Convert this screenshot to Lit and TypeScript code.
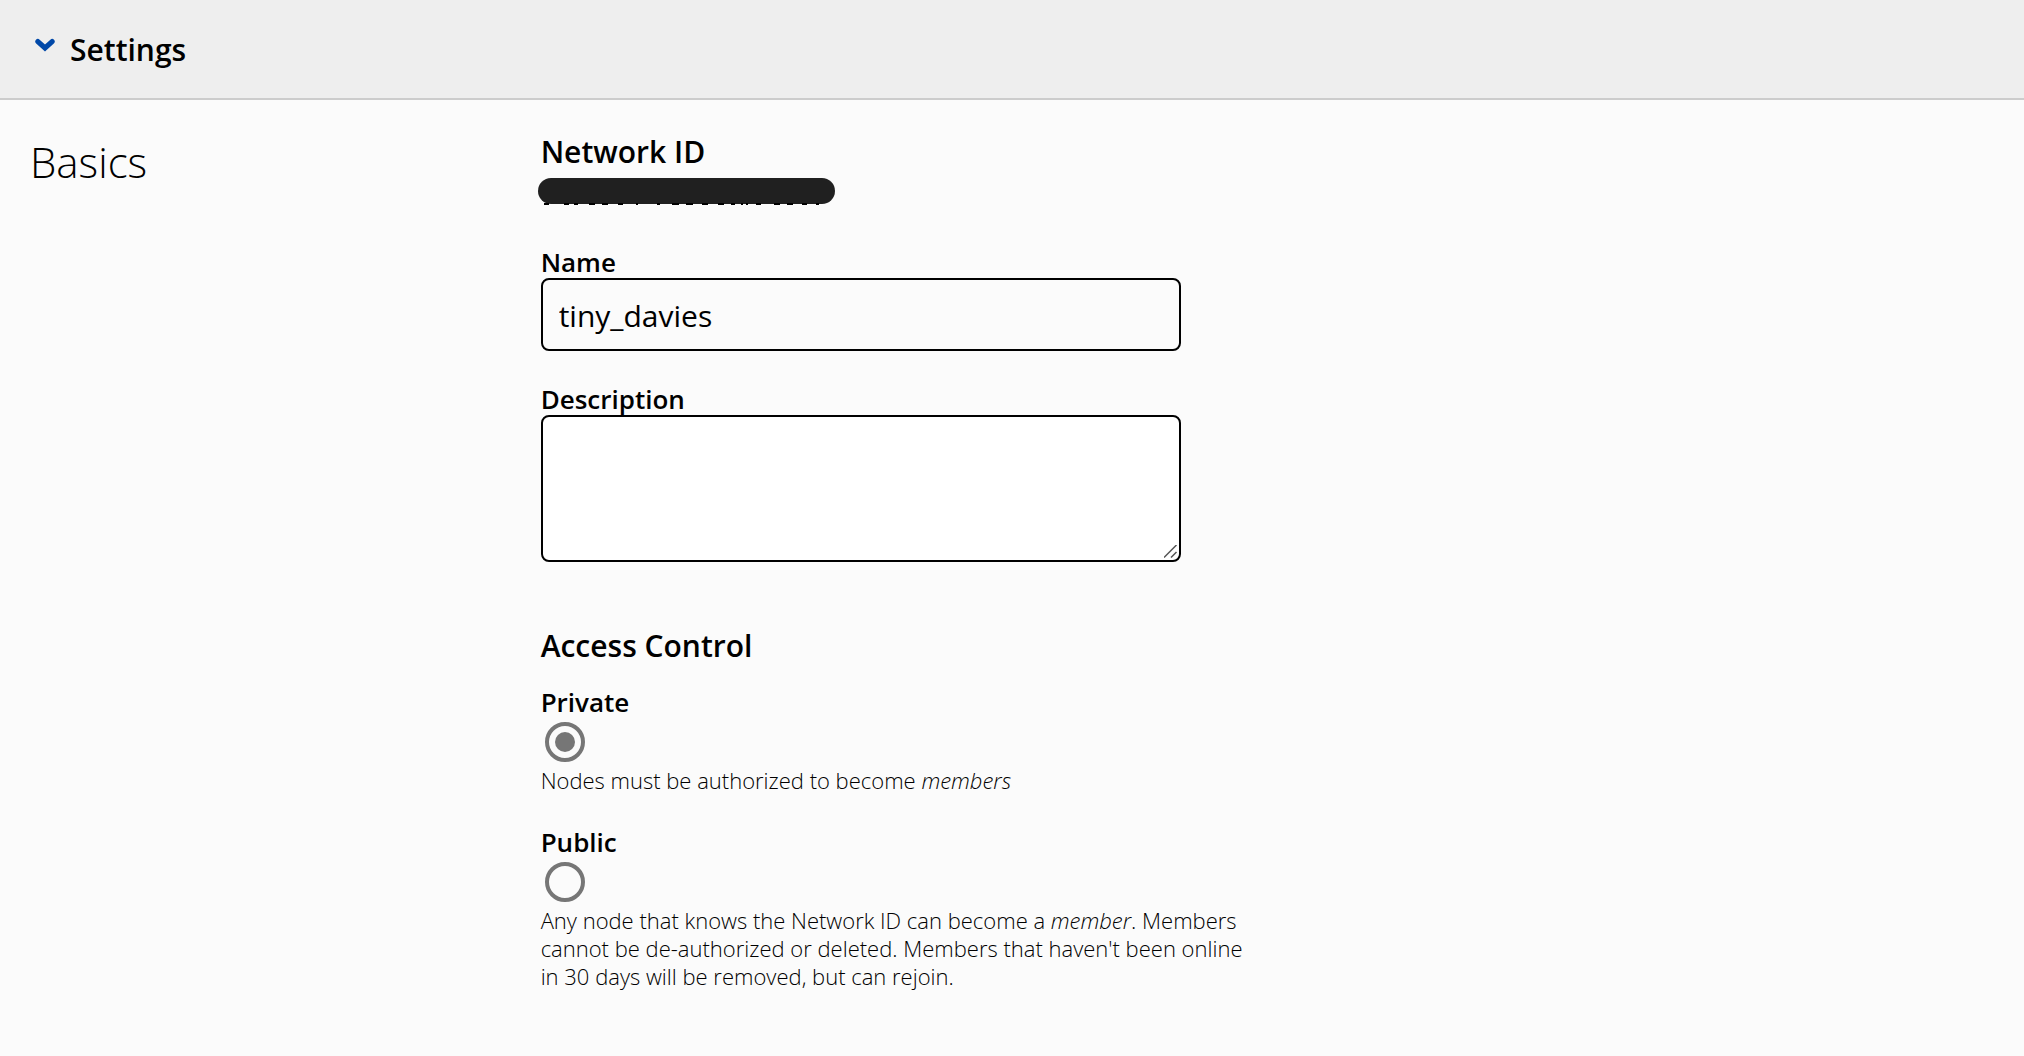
import { LitElement, html, css } from "lit";
import { customElement, state } from "lit/decorators.js";

@customElement("app-root")
export class AppRoot extends LitElement {
  static styles = css`
    :host {
      display: block;
      min-height: 100vh;
      background: #fbfbfb;
      color: #000;
      font-family: "Open Sans", "Noto Sans", sans-serif;
      font-size: 28px;
      line-height: 32px;
    }
    h1, h2, h3, p, fieldset, legend { margin: 0; padding: 0; border: 0; }
    .bar { background: #eee; border-bottom: 2px solid #ccc; }
    .toggle {
      display: flex;
      align-items: center;
      gap: 15px;
      width: 100%;
      padding: 28px 35px 26px;
      border: 0;
      background: none;
      color: inherit;
      font: 600 30px/44px "Open Sans", "Noto Sans", sans-serif;
      text-align: left;
    }
    .chevron { width: 20px; height: 14px; margin-bottom: 8px; overflow: visible; }
    .body {
      display: grid;
      grid-template-columns: 26% 1fr;
      padding: 32px 30px;
    }
    .section { font-size: 42px; line-height: 60px; font-weight: 300; }
    .heading { font-size: 30px; line-height: 40px; font-weight: 600; }
    .redacted { display: block; width: 297px; height: 28px; margin: 6px 0 0 -3px; }
    .field { display: flex; flex-direction: column; max-width: 640px; }
    .label { font-size: 26px; line-height: 32px; font-weight: 600; }
    .control {
      box-sizing: border-box;
      width: 100%;
      border: 2px solid #000;
      border-radius: 8px;
      padding: 13px 16px 11px;
      color: #000;
      font: 400 30px/45px "Open Sans", "Noto Sans", sans-serif;
    }
    .text { height: 73px; background: transparent; }
    .area { height: 147px; background: #fff; }
    .area::-webkit-resizer {
      background: url("data:image/svg+xml,%3Csvg xmlns='http://www.w3.org/2000/svg' width='15' height='15'%3E%3Cpath d='M0 12.5L12.5 0M7 12.5L12.5 7' stroke='%23555' stroke-width='1.5' fill='none'/%3E%3C/svg%3E") no-repeat;
    }
    .option { display: flex; flex-direction: column; align-items: flex-start; max-width: 720px; }
    .radio { width: 40px; height: 40px; margin: 4px; appearance: none; border: 4px solid #767676; border-radius: 50%; padding: 6px; }
    .radio:checked { background: #767676 content-box; }
    .help { font-size: 22px; line-height: 28px; font-weight: 300; }
    .name { margin-top: 40px; }
    .description { margin-top: 32px; }
    .access { margin-top: 64px; }
    .private { margin-top: 20px; }
    .public { margin-top: 32px; }
  `;

  @state() private open = true;
  @state() private access = "private";

  render() {
    return html`
      <header class="bar">
        <h1>
          <button class="toggle" aria-expanded=${this.open} @click=${() => (this.open = !this.open)}>
            <svg class="chevron" viewBox="0 0 20 14" aria-hidden="true">
              <path d="M2.9 2.6L10 9L17.1 2.6" fill="none" stroke="#0048a8" stroke-width="5.2" stroke-linecap="round" />
            </svg>
            Settings
          </button>
        </h1>
      </header>
      ${this.open ? this.settings() : ""}
    `;
  }

  private settings() {
    return html`
      <main class="body">
        <h2 class="section">Basics</h2>
        <form>
          <h3 class="heading">Network ID</h3>
          <svg class="redacted" viewBox="0 0 297 28" aria-hidden="true">
            <rect width="297" height="26" rx="13" fill="#202020" />
            <path d="M6 26h5M26 26h5M36 26h4M51 26h6M64 26h6M80 26h5M98 26h2M119 26h3M134 26h7M148 26h7M164 26h6M180 26h6M193 26h4M203 26h2M208 26h2M218 26h5M236 26h6M249 26h6M264 26h5M278 26h3" stroke="#000" stroke-width="2" />
          </svg>
          <div class="field name">
            <label class="label" for="name">Name</label>
            <input class="control text" id="name" type="text" .value=${"tiny_davies"} />
          </div>
          <div class="field description">
            <label class="label" for="description">Description</label>
            <textarea class="control area" id="description"></textarea>
          </div>
          <fieldset class="access">
            <legend class="heading">Access Control</legend>
            <div class="option private">
              <label class="label" for="private">Private</label>
              <input class="radio" id="private" type="radio" name="access" .checked=${this.access === "private"} @change=${() => (this.access = "private")} />
              <p class="help">Nodes must be authorized to become <em>members</em></p>
            </div>
            <div class="option public">
              <label class="label" for="public">Public</label>
              <input class="radio" id="public" type="radio" name="access" .checked=${this.access === "public"} @change=${() => (this.access = "public")} />
              <p class="help">Any node that knows the Network ID can become a <em>member</em>. Members cannot be de-authorized or deleted. Members that haven't been online in 30 days will be removed, but can rejoin.</p>
            </div>
          </fieldset>
        </form>
      </main>
    `;
  }
}
